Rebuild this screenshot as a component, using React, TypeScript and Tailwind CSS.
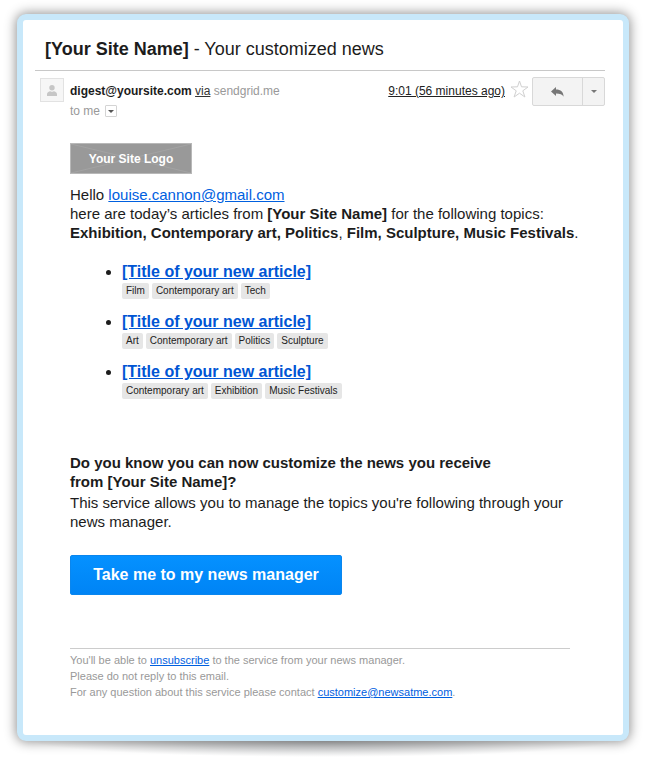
import React from "react";

const articles = [
  ["Film", "Contemporary art", "Tech"],
  ["Art", "Contemporary art", "Politics", "Sculpture"],
  ["Contemporary art", "Exhibition", "Music Festivals"],
];

function Tag({ children }: { children: React.ReactNode }) {
  return (
    <li className="rounded-xs bg-[#e6e6e6] px-1 text-[10px] leading-4 text-[#222]">
      {children}
    </li>
  );
}

function Article({ tags }: { tags: string[] }) {
  return (
    <li className="flex gap-[11px]">
      <span className="mt-2 h-[5px] w-[5px] shrink-0 rounded-full bg-[#1c1c1c]" />
      <div>
        <h3 className="text-base leading-5 font-bold">
          <a href="#article" className="text-[#0055d4] underline">
            [Title of your new article]
          </a>
        </h3>
        <ul className="mt-px flex flex-wrap gap-[3px]">
          {tags.map((tag) => (
            <Tag key={tag}>{tag}</Tag>
          ))}
        </ul>
      </div>
    </li>
  );
}

function MessageHeader() {
  return (
    <div className="flex items-start pt-1.5 pl-[5px] text-xs">
      <span className="mt-px flex h-6 w-6 shrink-0 items-center justify-center border border-[#e2e2e2] bg-[#f6f6f6]">
        <svg viewBox="0 0 10 11" className="h-[11px] w-[10px]" fill="#c6c6c6" aria-hidden="true">
          <circle cx="5" cy="2.8" r="2.7" />
          <path d="M0 11V9.2C0 7.400 1.600 6.400 3.400 6.200Q5 7.200 6.600 6.200C8.400 6.400 10 7.400 10 9.200V11Z" />
        </svg>
      </span>
      <div className="grow pt-1 pl-1.5 leading-5">
        <div className="flex justify-between whitespace-nowrap">
          <p className="text-[#999]">
            <strong className="text-[#1c1c1c]">digest@yoursite.com</strong>{" "}
            <a href="#via" className="text-[#333] underline">via</a> sendgrid.me
          </p>
          <a href="#time" className="text-[#222] underline">9:01 (56 minutes ago)</a>
        </div>
        <div className="flex items-center gap-[5px] text-[#999]">
          to me
          <button
            type="button"
            aria-label="Show details"
            className="flex h-3 w-3 items-center justify-center rounded-[1px] border border-[#d4d4d4]"
          >
            <svg viewBox="0 0 6 3" className="h-[3px] w-1.5" fill="#555" aria-hidden="true">
              <path d="M0 0H6L3 3Z" />
            </svg>
          </button>
        </div>
      </div>
      <button type="button" aria-label="Star" className="mt-[3px] ml-[5px] shrink-0">
        <svg viewBox="0 0 19 18" className="h-[18px] w-[19px]" fill="#fff" stroke="#d0d0d0" aria-hidden="true">
          <path d="M9.500 1L11.500 6.800L18 7L12.800 10.800L14.900 17L9.500 13.200L4.100 17L6.200 10.800L1 7L7.500 6.800Z" />
        </svg>
      </button>
      <div className="ml-[3px] flex h-[29px] w-[73px] shrink-0 rounded-xs border border-[#d8d8d8] bg-[#f3f3f3]">
        <button type="button" aria-label="Reply" className="flex grow items-center justify-center">
          <svg viewBox="0 0 13 10" className="h-[10px] w-[13px]" fill="#777" aria-hidden="true">
            <path d="M5 0V2.600C9.800 2.600 12.400 5 12.600 9.800C11.400 7.400 9 6.400 5 6.400V9L0 4.500Z" />
          </svg>
        </button>
        <button
          type="button"
          aria-label="More options"
          className="flex w-[22px] items-center justify-center border-l border-[#d8d8d8]"
        >
          <svg viewBox="0 0 6 3" className="h-[3px] w-1.5" fill="#777" aria-hidden="true">
            <path d="M0 0H6L3 3Z" />
          </svg>
        </button>
      </div>
    </div>
  );
}

export default function App() {
  return (
    <div className="overflow-hidden bg-white pt-3.5 pr-4 pb-[19px] pl-[17px] font-['Liberation_Sans',Arial,sans-serif] text-[#1c1c1c]">
      <div className="relative">
        <div className="absolute inset-x-4 -bottom-4 h-8 bg-[radial-gradient(closest-side,#7c7f8290,#8c8f9260_50%,transparent)]" />
        <main className="relative rounded-[9px] border-6 border-[#c8e8fa] bg-[#c8e8fa] shadow-[0_0_12px_1px_#00000070]">
          <div className="rounded-[3px] bg-white pr-[18px] pb-[35px] pl-3">
            <h1 className="h-[51px] border-b border-[#c8c8c8] pl-2.5 text-lg leading-[58px] font-normal whitespace-nowrap">
              <strong>[Your Site Name]</strong> - Your customized news
            </h1>
            <MessageHeader />

            <div className="pt-[22px] pr-[35px] pl-[35px]">
              <div className="relative flex h-[31px] w-[122px] items-center justify-center border border-[#b8b8b8] bg-[#999] text-xs font-bold text-white">
                <svg
                  viewBox="0 0 120 29"
                  preserveAspectRatio="none"
                  className="absolute inset-0 h-full w-full"
                  stroke="#a3a3a3"
                  aria-hidden="true"
                >
                  <path d="M0 0L120 29M0 29L120 0" />
                </svg>
                <span className="relative">Your Site Logo</span>
              </div>

              <p className="mt-[11px] text-[15px] leading-[19px] sm:whitespace-nowrap">
                Hello{" "}
                <a href="mailto:louise.cannon@gmail.com" className="text-[#0060df] underline">
                  louise.cannon@gmail.com
                </a>
                <br />
                here are today’s articles from <strong>[Your Site Name]</strong> for the following topics:
                <br />
                <strong>Exhibition, Contemporary art, Politics</strong>,{" "}
                <strong>Film, Sculpture, Music Festivals</strong>.
              </p>

              <ul className="mt-5 flex flex-col gap-[13px] pl-9">
                {articles.map((tags, index) => (
                  <Article key={index} tags={tags} />
                ))}
              </ul>

              <h2 className="mt-[54px] text-[15px] leading-[19px] font-bold">
                Do you know you can now customize the news you receive
                <br />
                from [Your Site Name]?
              </h2>
              <p className="mt-0.5 text-[15px] leading-[19px]">
                This service allows you to manage the topics you're following through your
                <br />
                news manager.
              </p>

              <button
                type="button"
                className="mt-6 h-10 w-[272px] rounded-xs border border-[#0a86ee] bg-linear-to-b from-[#0591ff] to-[#0084f5] text-base font-bold text-white"
              >
                Take me to my news manager
              </button>

              <footer className="mt-[53px] border-t border-[#ccc] pt-[3px] text-[11px] leading-4 text-[#999]">
                <p>
                  You'll be able to{" "}
                  <a href="#unsubscribe" className="text-[#0060df] underline">unsubscribe</a> to the
                  service from your news manager.
                </p>
                <p>Please do not reply to this email.</p>
                <p>
                  For any question about this service please contact{" "}
                  <a href="mailto:customize@newsatme.com" className="text-[#0060df] underline">
                    customize@newsatme.com
                  </a>
                  .
                </p>
              </footer>
            </div>
          </div>
        </main>
      </div>
    </div>
  );
}
